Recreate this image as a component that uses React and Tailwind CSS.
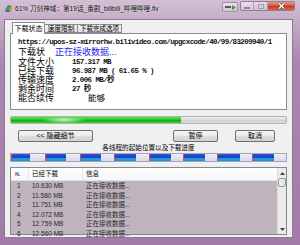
const threads = [10.63, 11.58, 11.751, 12.072, 12.759, 12.56, 12.8, 12.84];
const SEG = 157.317 / 8;

const rows = [
  ['1', '10.630 MB'],
  ['2', '11.580 MB'],
  ['3', '11.751 MB'],
  ['4', '12.072 MB'],
  ['5', '12.759 MB'],
  ['6', '12.560 MB'],
];

function AppIcon() {
  return (
    <svg width="9" height="9" viewBox="0 0 9 9">
      <path d="M1 6 L4 1 L8 2 L5 5 Z" fill="#3aa03a" />
      <path d="M1 6 L5 5 L6 8 L2 8 Z" fill="#2d6fd0" />
      <path d="M5 5 L8 2 L8 6 L6 8 Z" fill="#e89020" />
    </svg>
  );
}

function CaptionButtons() {
  return (
    <div className="ml-auto mr-[5px] mt-[1px] flex items-start">
      <div className="w-[16px] h-[10px] mt-[1px] rounded-[2px] border border-[#7a6080]/60 bg-[linear-gradient(to_bottom,rgba(255,255,255,0.55),rgba(255,255,255,0.2))] flex items-center justify-center">
        <div className="w-[6px] h-[2px] bg-[#555] mr-[1px]" />
        <svg width="4" height="5" viewBox="0 0 4 5"><path d="M0 0 L4 2.5 L0 5 Z" fill="#22b022" /></svg>
      </div>
      <div className="ml-[2px] h-[10px] flex rounded-[2px] border border-[#7a6080]/70 overflow-hidden">
        <div className="w-[13px] h-full bg-[linear-gradient(to_bottom,rgba(255,255,255,0.55),rgba(255,255,255,0.2))] flex items-center justify-center border-r border-[#7a6080]/50">
          <div className="w-[6px] h-[2px] mt-[3px] bg-white border border-[#555]/70" />
        </div>
        <div className="w-[14px] h-full bg-[linear-gradient(to_bottom,rgba(255,255,255,0.45),rgba(255,255,255,0.15))] flex items-center justify-center border-r border-[#7a6080]/50">
          <div className="w-[6px] h-[5px] border border-[#a898aa]" />
        </div>
        <div className="w-[26px] h-full bg-[linear-gradient(to_bottom,#e99b8c,#d0543f_50%,#c23a22_55%,#d86a4a)] flex items-center justify-center">
          <svg width="7" height="6" viewBox="0 0 7 6">
            <path d="M1 0.5 L6 5.5 M6 0.5 L1 5.5" stroke="#444" strokeWidth="2.4" />
            <path d="M1 0.5 L6 5.5 M6 0.5 L1 5.5" stroke="#fff" strokeWidth="1.4" />
          </svg>
        </div>
      </div>
    </div>
  );
}

function Btn({ w, children }) {
  return (
    <div
      className={`${w} h-[12px] rounded-[2px] border border-[#707070] bg-[linear-gradient(to_bottom,#f4f4f4_0%,#ececec_45%,#dedede_50%,#d2d2d2_100%)] flex items-center justify-center text-[7px] leading-[10px] text-black`}
    >
      {children}
    </div>
  );
}

export default function App() {
  return (
    <div className="w-[300px] h-[245px] overflow-hidden flex flex-col bg-[linear-gradient(to_bottom,#d2bfd4_0px,#c5aec9_19px,#a988ae_60px,#a27ba8_100%)] font-['Liberation_Sans','Noto_Sans_CJK_SC',sans-serif] text-black">
      {/* title bar */}
      <div className="h-[19px] shrink-0 flex items-start">
        <div className="mt-[4px] ml-[4px] w-[9px] h-[9px]">
          <AppIcon />
        </div>
        <div className="ml-[2px] mt-[4px] text-[6.6px] leading-[10px] whitespace-nowrap text-[#111] [text-shadow:0_0_3px_rgba(255,255,255,0.9)]">
          61% 刀剑神域：第19话_番剧_bilibili_哔哩哔哩.flv
        </div>
        <CaptionButtons />
      </div>

      {/* client */}
      <div className="flex-1 ml-[4px] mr-[7px] mb-[7px] bg-[#f0f0f0] border border-[#8c7892] px-[5px] pt-[2px] pb-[2px] flex flex-col">
        {/* tabs */}
        <div className="h-[11px] shrink-0 flex items-end pl-[2px] relative z-10">
          <div className="w-[33px] h-[12px] -mb-px bg-white border border-b-0 border-[#898c95] flex items-center justify-center text-[7px] leading-[9px]">
            下载状态
          </div>
          <div className="w-[33px] h-[9px] border border-[#898c95] border-l-0 bg-[linear-gradient(to_bottom,#f3f3f3,#e2e2e2)] flex items-center justify-center text-[6.8px] leading-[9px]">
            速度限制
          </div>
          <div className="w-[44px] h-[9px] border border-[#898c95] border-l-0 bg-[linear-gradient(to_bottom,#f3f3f3,#e2e2e2)] flex items-center justify-center text-[6.5px] leading-[9px]">
            下载完成选项
          </div>
        </div>

        {/* panel */}
        <div className="h-[77px] shrink-0 bg-white border border-[#898c95] pl-[7px] pt-[3px] flex flex-col overflow-hidden">
          <div className="h-[10px] leading-[10px] whitespace-nowrap overflow-hidden font-['Liberation_Mono','Noto_Sans_CJK_SC',monospace] text-[7.5px] tracking-[-0.6px] font-bold text-[#111]">
            https://upos-sz-mirrorhw.bilivideo.com/upgcxcode/40/99/83209940/1
          </div>
          <div className="h-[10px] flex items-center text-[9px] leading-[10px]">
            <span>下载状</span>
            <span className="ml-[10px] text-[#1c1ce6]">正在接收数据...</span>
          </div>
          <div className="mt-[1px] flex flex-col">
            {[
              ['文件大小', '157.317 MB', 0],
              ['已经下载', '96.987 MB ( 61.65 % )', 0],
              ['传输速度', '2.006 MB/秒', 0],
              ['剩余时间', '27 秒', 0],
              ['能否续传', '能够', 1],
            ].map(([k, v, cjk]) => (
              <div key={k} className="h-[9px] flex items-center">
                <span className="w-[54px] text-[9px] leading-[9px]">{k}</span>
                {cjk ? (
                  <span className="pl-[16px] text-[8.5px] leading-[9px]">{v}</span>
                ) : (
                  <span className="font-['Liberation_Mono','Noto_Sans_CJK_SC',monospace] text-[7.5px] tracking-[-0.6px] font-bold leading-[9px] text-[#111]">
                    {v}
                  </span>
                )}
              </div>
            ))}
          </div>
        </div>

        {/* main progress */}
        <div className="mt-[6px] h-[8px] shrink-0 rounded-[2px] border border-[#b2b2b2] bg-[linear-gradient(to_bottom,#ececec,#dadada_50%,#cfcfcf_51%,#dcdcdc)] flex overflow-hidden">
          <div
            className="h-full relative bg-[linear-gradient(to_bottom,#5fe05f,#22c822_45%,#0eae0e_55%,#34d434)]"
            style={{ width: '61.65%' }}
          >
            <div className="absolute left-[30px] top-0 w-[46px] h-full bg-[radial-gradient(ellipse_at_center,rgba(210,255,210,0.95),rgba(160,255,160,0)_70%)]" />
          </div>
        </div>

        {/* buttons */}
        <div className="mt-[6px] h-[12px] shrink-0 flex pl-[8px]">
          <Btn w="w-[75px]">&lt;&lt; 隐藏细节</Btn>
          <div className="ml-[80px]">
            <Btn w="w-[45px]">暂停</Btn>
          </div>
          <div className="ml-[17px]">
            <Btn w="w-[40px]">取消</Btn>
          </div>
        </div>

        <div className="mt-[1px] h-[10px] shrink-0 text-center text-[6.6px] leading-[10px]">
          各线程的起始位置以及下载进度
        </div>

        {/* thread bar */}
        <div className="h-[9px] shrink-0 flex border border-[#a4a4b4] bg-[linear-gradient(to_bottom,#eeeef8,#d6d8ee)]">
          {threads.map((mb, i) => (
            <div key={i} className="flex-1 flex border-l border-[#e04848]">
              <div
                className="h-full bg-[linear-gradient(to_bottom,#3f5fe0_0%,#2446cc_20%,#1f40c6_55%,#22a0de_65%,#1a8fd2_100%)]"
                style={{ width: `${(mb / SEG) * 100}%` }}
              />
            </div>
          ))}
        </div>

        {/* list */}
        <div className="mt-[5px] h-[68px] shrink-0 border border-[#828790] flex bg-[#bfb3be]">
          <div className="flex-1 flex flex-col">
            <div className="h-[13px] shrink-0 bg-[linear-gradient(to_bottom,#ffffff,#f6f6f6)] border-b border-[#e0e0e0] flex text-[6.5px] leading-[12px]">
              <div className="w-[18px] pl-[4px] border-r border-[#e8e8e8] text-[#4a5a78] font-bold text-[5.5px]">N.</div>
              <div className="w-[54px] pl-[3px] border-r border-[#e8e8e8]">已经下载</div>
              <div className="flex-1 pl-[3px]">信息</div>
            </div>
            {rows.map(([n, s]) => (
              <div key={n} className="h-[9.5px] shrink-0 flex text-[6.5px] leading-[9.5px] text-[#2a2a2a]">
                <div className="w-[18px] pl-[6px]">{n}</div>
                <div className="w-[54px] pl-[3px]">{s}</div>
                <div className="flex-1 pl-[3px]">正在接收数据...</div>
              </div>
            ))}
          </div>
          <div className="w-[9px] shrink-0 bg-[#ececec] border-l border-[#dcdcdc] flex flex-col items-center">
            <div className="h-[10px] flex items-center justify-center">
              <svg width="5" height="3" viewBox="0 0 5 3"><path d="M0 3 L2.5 0 L5 3 Z" fill="#444" /></svg>
            </div>
            <div className="w-[8px] h-[9px] rounded-[2px] border border-[#9a9a9a] bg-[linear-gradient(to_right,#f4f4f4,#dcdcdc)]" />
            <div className="flex-1" />
            <div className="h-[9px] flex items-center justify-center">
              <svg width="5" height="3" viewBox="0 0 5 3"><path d="M0 0 L5 0 L2.5 3 Z" fill="#444" /></svg>
            </div>
          </div>
        </div>
      </div>
    </div>
  );
}
